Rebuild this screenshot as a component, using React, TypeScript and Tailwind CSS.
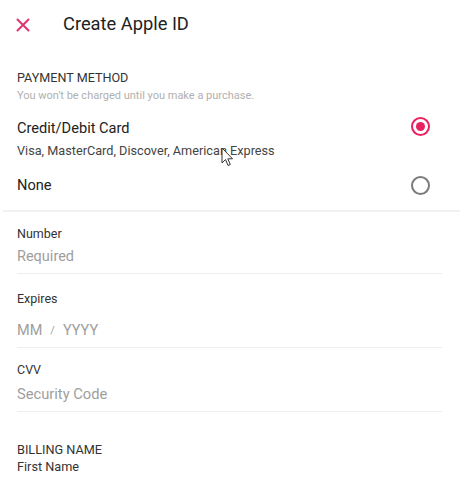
import React from "react";

function Radio({ checked }: { checked?: boolean }) {
  return checked ? (
    <div className="w-[19px] h-[19px] rounded-full border-2 border-[#e8215f] flex items-center justify-center">
      <div className="w-[9px] h-[9px] rounded-full bg-[#e8215f]" />
    </div>
  ) : (
    <div className="w-[19px] h-[19px] rounded-full border-2 border-[#7a7a7a]" />
  );
}

function Cursor() {
  return (
    <svg width="13" height="20" viewBox="0 0 13 20" className="absolute left-[221px] top-[147px]">
      <path d="M1 1 L1 16 L4.5 12.5 L7 18.5 L9.3 17.5 L6.8 11.8 L11.5 11.8 Z" fill="#fff" stroke="#333" strokeWidth="1" strokeLinejoin="round" />
    </svg>
  );
}

export default function App() {
  return (
    <div className="relative w-[460px] h-[478px] overflow-hidden bg-white font-['Roboto','Noto_Sans',sans-serif]">
      {/* Header */}
      <div className="h-[46px] flex items-center pl-[16px]">
        <svg width="14" height="14" viewBox="0 0 14 14" className="mt-[3px]">
          <path d="M1.5 1.5 L12.5 12.5 M12.5 1.5 L1.5 12.5" stroke="#e0346d" strokeWidth="2" strokeLinecap="round" />
        </svg>
        <h1 className="ml-[33px] text-[18.3px] leading-[19px] text-[#222]">Create Apple ID</h1>
      </div>

      {/* Payment method */}
      <div className="pl-[17px] pr-[30px]">
        <div className="mt-[25px] text-[12.6px] leading-[13px] text-[#333]">PAYMENT METHOD</div>
        <div className="mt-[6px] text-[11px] leading-[11px] text-[#b0b0b0]">
          You won't be charged until you make a purchase.
        </div>

        <div className="mt-[20px] flex justify-between items-start">
          <div>
            <div className="text-[14.6px] leading-[15px] text-[#222]">Credit/Debit Card</div>
            <div className="mt-[9px] text-[12.7px] leading-[12px] text-[#444]">
              Visa, MasterCard, Discover, American Express
            </div>
          </div>
          <div className="-mt-[4px]">
            <Radio checked />
          </div>
        </div>

        <div className="mt-[19px] flex justify-between items-center">
          <div className="text-[14.6px] leading-[15px] text-[#222]">None</div>
          <Radio />
        </div>
      </div>

      <div className="mt-[15px] ml-[3px] h-[2px] bg-[#f1f1f1]" />

      {/* Card fields */}
      <div className="pl-[17px] pr-[18px]">
        <div className="pb-[9px] border-b border-[#eeeeee]">
          <div className="mt-[16px] text-[12.5px] leading-[12.5px] text-[#333]">Number</div>
          <div className="mt-[8px] text-[14.5px] leading-[15px] text-[#9e9e9e]">Required</div>
        </div>
        <div className="pb-[9px] border-b border-[#eeeeee]">
          <div className="mt-[19px] text-[12.5px] leading-[12.5px] text-[#333]">Expires</div>
          <div className="mt-[18px] flex items-center text-[14.5px] leading-[15px] text-[#9e9e9e]">
            <span>MM</span>
            <span className="ml-[8px] text-[11px]">/</span>
            <span className="ml-[8px]">YYYY</span>
          </div>
        </div>
        <div className="pb-[9px] border-b border-[#eeeeee]">
          <div className="mt-[16px] text-[12.5px] leading-[12.5px] text-[#333]">CVV</div>
          <div className="mt-[10px] text-[14.7px] leading-[15px] text-[#9e9e9e]">Security Code</div>
        </div>

        <div className="mt-[31px] text-[12.7px] leading-[13px] text-[#333]">BILLING NAME</div>
        <div className="mt-[5px] text-[12.7px] leading-[12.5px] text-[#333]">First Name</div>
      </div>

      <Cursor />
    </div>
  );
}
